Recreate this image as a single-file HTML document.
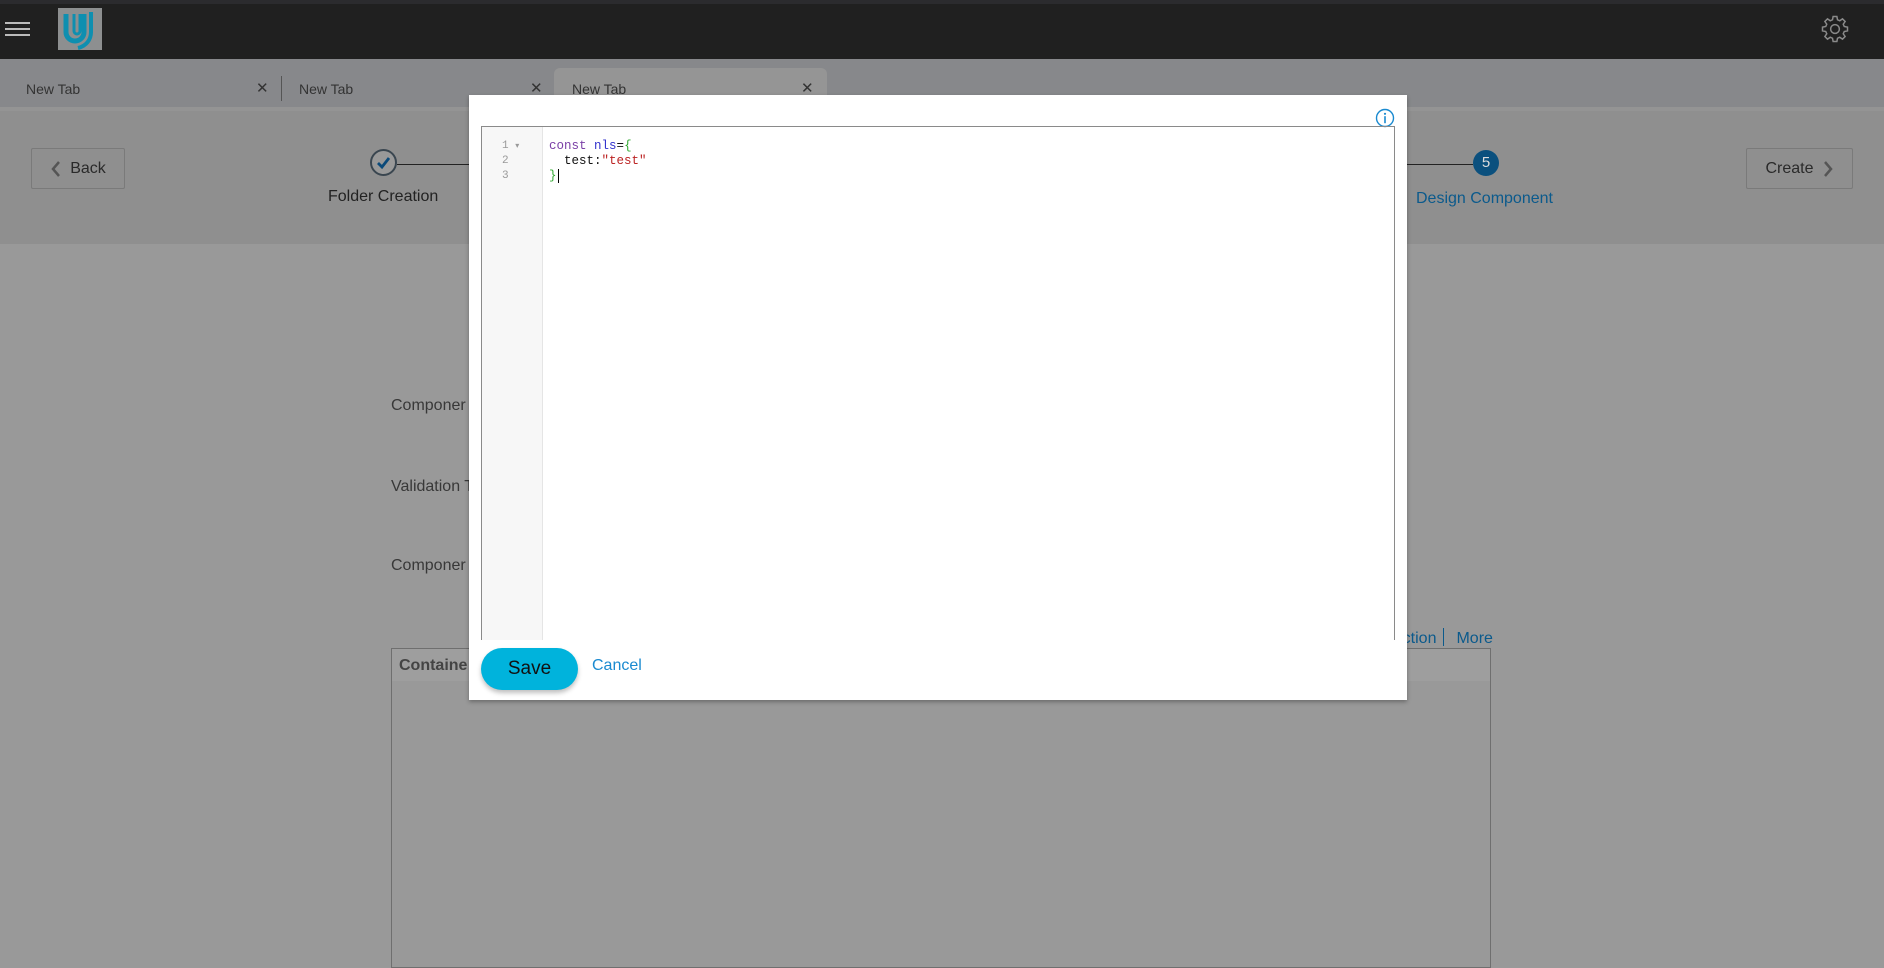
<!DOCTYPE html>
<html><head><meta charset="utf-8"><style>
*{margin:0;padding:0;box-sizing:border-box}
body{width:1884px;height:958px;overflow:hidden;background:#999;font-family:"Liberation Sans",sans-serif;position:relative}
.a{position:absolute}
.top{left:0;top:0;width:1884px;height:59px;background:#202020;border-top:4px solid #2b2b2e}
.tabs{left:0;top:59px;width:1884px;height:48px;background:#87888b}
.step{left:0;top:107px;width:1884px;height:137px;background:#8f8f8f;border-top:4px solid #949494}
.tt{font-size:14px;color:#333;top:81px}
.x{font-size:15px;color:#333;top:79px}
.btn{border:1px solid #7a7a7a;border-radius:2px;font-size:16px;color:#2a2a2a;display:flex;align-items:center;justify-content:center;gap:8px}
.lbl{font-size:16px;color:#383838}
.modal{left:469px;top:95px;width:938px;height:605px;background:#fff;box-shadow:0 2px 4px rgba(0,0,0,.3)}
.ed{left:12px;top:31px;width:914px;height:514px;border:1px solid #8a8a8a;border-bottom:none}
.gut{left:0;top:0;width:61px;height:100%;background:#f7f7f7;border-right:1px solid #e5e5e5}
.ln{font-family:"Liberation Mono",monospace;font-size:11px;color:#999;line-height:15px;left:20px;top:12px}
.code{font-family:"Liberation Mono",monospace;font-size:12.5px;line-height:15px;left:67px;top:12px;color:#111;white-space:pre}
</style></head><body>
<div class="a top"></div>
<div class="a" style="left:5px;top:22px;width:25px;height:2px;background:#bbb;box-shadow:0 6px 0 #bbb,0 12px 0 #bbb"></div>
<div class="a" style="left:58px;top:8px;width:44px;height:42px;background:#8d8f90">
<svg width="44" height="42" viewBox="0 0 44 42"><path d="M8 6v18a9 9 0 0 0 18 0V6" fill="none" stroke="#0e8fb0" stroke-width="5"/><path d="M16 6v17a3 3 0 0 0 6 0V6" fill="none" stroke="#0e8fb0" stroke-width="3"/><path d="M33 4v20c0 8-5 14-13 16" fill="none" stroke="#0e8fb0" stroke-width="4"/></svg></div>
<svg class="a" style="left:1820px;top:14px" width="30" height="30" viewBox="0 0 24 24"><path d="M12 8.5a3.5 3.5 0 1 0 0 7 3.5 3.5 0 0 0 0-7z M10.5 2h3l.5 2.6 1.8.8 2.2-1.5 2.1 2.1-1.5 2.2.8 1.8 2.6.5v3l-2.6.5-.8 1.8 1.5 2.2-2.1 2.1-2.2-1.5-1.8.8-.5 2.6h-3l-.5-2.6-1.8-.8-2.2 1.5-2.1-2.1 1.5-2.2-.8-1.8L2 13.5v-3l2.6-.5.8-1.8L3.9 6l2.1-2.1 2.2 1.5 1.8-.8z" fill="none" stroke="#8a8a8a" stroke-width="1.2"/></svg>
<div class="a tabs"></div>
<div class="a" style="left:554px;top:68px;width:273px;height:39px;background:#959595;border-radius:6px 6px 0 0"></div>
<div class="a tt" style="left:26px">New Tab</div><div class="a x" style="left:256px">✕</div>
<div class="a" style="left:281px;top:76px;width:1px;height:25px;background:#555"></div>
<div class="a tt" style="left:299px">New Tab</div><div class="a x" style="left:530px">✕</div>
<div class="a tt" style="left:572px">New Tab</div><div class="a x" style="left:801px">✕</div>
<div class="a step"></div>
<div class="a btn" style="left:31px;top:148px;width:94px;height:41px"><svg width="12" height="18" viewBox="0 0 12 18"><path d="M9 2L3 9l6 7" fill="none" stroke="#555" stroke-width="2.5"/></svg>Back</div>
<div class="a btn" style="left:1746px;top:148px;width:107px;height:41px">Create<svg width="12" height="18" viewBox="0 0 12 18"><path d="M3 2l6 7-6 7" fill="none" stroke="#555" stroke-width="2.5"/></svg></div>
<div class="a" style="left:370px;top:149px;width:27px;height:27px;border:2px solid #3a4650;border-radius:50%;background:#999"><svg width="23" height="23" viewBox="0 0 23 23"><path d="M6 12l4 4 7-9" fill="none" stroke="#0b4a7a" stroke-width="2.8"/></svg></div>
<div class="a" style="left:397px;top:164px;width:72px;height:1px;background:#222"></div>
<div class="a" style="left:328px;top:188px;font-size:16px;color:#222">Folder Creation</div>
<div class="a" style="left:1407px;top:164px;width:66px;height:1px;background:#222"></div>
<div class="a" style="left:1473px;top:150px;width:26px;height:26px;border-radius:50%;background:#0b507e;color:#ddd;font-size:15px;text-align:center;line-height:26px">5</div>
<div class="a" style="left:1416px;top:190px;font-size:16px;color:#0b5a8c">Design Component</div>
<div class="a lbl" style="left:391px;top:397px">Componer</div>
<div class="a lbl" style="left:391px;top:478px">Validation T</div>
<div class="a lbl" style="left:391px;top:557px">Componer</div>
<div class="a" style="left:1392px;top:628px;font-size:16px;color:#0b5a8c">Action<span style="display:inline-block;width:1px;height:18px;background:#0b5a8c;margin:0 12px -3px 7px"></span>More</div>
<div class="a" style="left:391px;top:648px;width:1100px;height:320px;border:1px solid #6f6f6f"></div>
<div class="a" style="left:392px;top:649px;width:1098px;height:32px;background:#9e9e9e;font-weight:bold;font-size:16px;color:#444;padding:8px 7px">Containe</div>
<div class="a modal">
<svg class="a" style="left:906px;top:13px" width="20" height="20" viewBox="0 0 20 20"><circle cx="10" cy="10" r="8.5" fill="none" stroke="#1a8ad0" stroke-width="1.4"/><circle cx="10" cy="5.8" r="1.1" fill="#1a8ad0"/><rect x="9.2" y="8.2" width="1.6" height="7" fill="#1a8ad0"/></svg>
<div class="a ed"><div class="a gut"></div>
<div class="a ln">1 <span style="font-size:8px">▾</span><br>2<br>3</div>
<div class="a code"><span style="color:#7a3fa6">const</span> <span style="color:#3333cc">nls</span>=<span style="color:#3a3">{</span>
  test:<span style="color:#b22">"test"</span>
<span style="color:#3a3">}</span><span style="border-left:1px solid #000;margin-left:1px"></span></div>
</div>
<div class="a" style="left:12px;top:553px;width:97px;height:42px;border-radius:21px;background:#00b3dc;box-shadow:0 3px 5px rgba(0,0,0,.25);font-size:19px;color:#111;text-align:center;line-height:42px">Save</div>
<div class="a" style="left:123px;top:562px;font-size:16px;color:#1a8ad0">Cancel</div>
</div>
</body></html>
